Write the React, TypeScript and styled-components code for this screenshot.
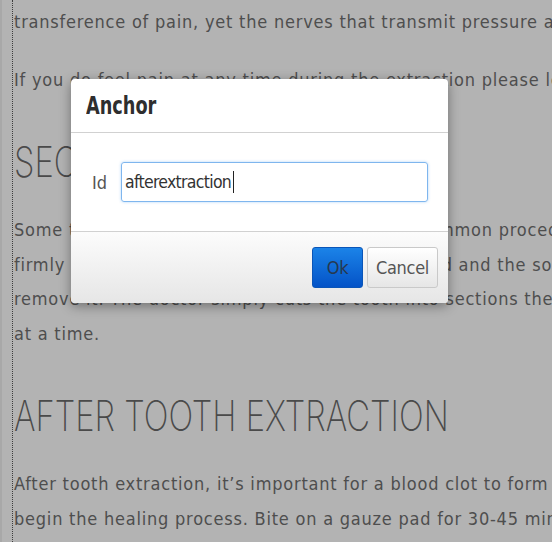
import styled, { createGlobalStyle } from "styled-components";

const GlobalStyle = createGlobalStyle`
  html, body {
    margin: 0;
    padding: 0;
    background-color: #b3b3b3;
    overflow: hidden;
  }
`;

const Page = styled.div`
  position: relative;
  width: 552px;
  height: 542px;
  overflow: hidden;
  box-sizing: border-box;
  border-left: 2px solid #a8a8a8;
`;

const Editable = styled.div`
  margin-left: 10px;
  padding: 5px 0 0 1px;
  min-height: 100%;
  box-sizing: border-box;
  border-left: 1px dotted #3c3c3c;
  color: #4e4e4e;
`;

const Paragraph = styled.p`
  margin: 23px 0;
  font-family: "DejaVu Sans Condensed", "Liberation Sans", sans-serif;
  font-size: 18px;
  line-height: 34.5px;
  letter-spacing: 0.78px;
  white-space: nowrap;

  &:first-child {
    margin-top: 0;
  }
`;

const Heading = styled.h2`
  margin: 40px 0 26px;
  font-family: Inter, "Open Sans", sans-serif;
  font-size: 42px;
  font-weight: 200;
  line-height: 50px;
  white-space: nowrap;
  color: #4a4a4a;
  transform: scaleX(0.78);
  transform-origin: left center;
`;

const Dialog = styled.div`
  position: absolute;
  left: 69px;
  top: 79px;
  width: 377px;
  background-color: #fff;
  border-radius: 4px;
  box-shadow: 0 3px 12px rgba(0, 0, 0, 0.38);
  overflow: hidden;
  font-family: "DejaVu Sans Condensed", "Liberation Sans", sans-serif;
`;

const DialogHeader = styled.div`
  height: 53px;
  display: flex;
  align-items: center;
  padding: 0 15px;
  border-bottom: 1px solid #d1d1d1;
`;

const Title = styled.h3`
  margin: 0;
  font-size: 24px;
  font-weight: 700;
  color: #2e2e2e;
  transform: scaleX(0.82);
  transform-origin: left center;
`;

const DialogBody = styled.div`
  height: 98px;
  box-sizing: border-box;
  display: flex;
  align-items: center;
  padding: 0 20px 0 21px;
`;

const Label = styled.label`
  width: 29px;
  font-size: 18px;
  color: #555;
`;

const Input = styled.div`
  flex: 1;
  height: 40px;
  box-sizing: border-box;
  display: flex;
  align-items: center;
  padding: 0 3px;
  border: 1px solid #7fb6ee;
  border-radius: 3px;
  box-shadow: 0 0 3px rgba(80, 160, 240, 0.45);
  font-size: 17.5px;
  letter-spacing: -0.7px;
  color: #333;
`;

const Caret = styled.span`
  display: inline-block;
  width: 1px;
  height: 22px;
  margin-left: 2px;
  background-color: #222;
`;

const DialogFooter = styled.div`
  height: 71px;
  display: flex;
  justify-content: flex-end;
  align-items: center;
  gap: 4px;
  padding: 0 10px;
  border-top: 1px solid #d1d1d1;
  background: linear-gradient(to bottom, #fcfcfc, #e6e6e6);
`;

const FooterButton = styled.button<{ $primary?: boolean; $width: number }>`
  width: ${({ $width }) => $width}px;
  height: 41px;
  padding: 0;
  font-family: inherit;
  font-size: 18px;
  letter-spacing: -0.3px;
  border-radius: 3px;
  cursor: pointer;
  border: 1px solid ${({ $primary }) => ($primary ? "#0a55b8" : "#c9c9c9")};
  color: ${({ $primary }) => ($primary ? "#26384f" : "#555")};
  background: ${({ $primary }) =>
    $primary
      ? "linear-gradient(to bottom, #1b83e8, #0453c7)"
      : "linear-gradient(to bottom, #ffffff, #e6e6e6)"};
`;

export default function App() {
  return (
    <>
      <GlobalStyle />
      <Page>
        <Editable>
          <Paragraph>
            transference of pain, yet the nerves that transmit pressure are not affected.
          </Paragraph>
          <Paragraph>
            If you do feel pain at any time during the extraction please let us know.
          </Paragraph>
          <Heading>SECTIONING</Heading>
          <Paragraph>
            Some teeth require sectioning. This is a very common procedure done
            <br />
            firmly anchored in its socket or the root is curved and the socket can’t
            <br />
            remove it. The doctor simply cuts the tooth into sections then removes each section one
            <br />
            at a time.
          </Paragraph>
          <Heading>AFTER TOOTH EXTRACTION</Heading>
          <Paragraph>
            After tooth extraction, it’s important for a blood clot to form to stop the bleeding and
            <br />
            begin the healing process. Bite on a gauze pad for 30-45 minutes immediately after
          </Paragraph>
        </Editable>
        <Dialog>
          <DialogHeader>
            <Title>Anchor</Title>
          </DialogHeader>
          <DialogBody>
            <Label>Id</Label>
            <Input>
              afterextraction
              <Caret />
            </Input>
          </DialogBody>
          <DialogFooter>
            <FooterButton $primary $width={51}>Ok</FooterButton>
            <FooterButton $width={71}>Cancel</FooterButton>
          </DialogFooter>
        </Dialog>
      </Page>
    </>
  );
}
